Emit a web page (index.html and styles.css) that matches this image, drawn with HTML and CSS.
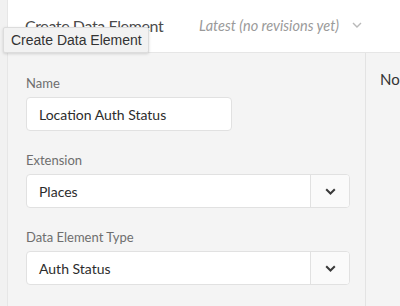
FILE: index.html
```html
<!DOCTYPE html>
<html lang="en">

<head>
  <meta charset="UTF-8">
  <meta name="viewport" content="width=device-width, initial-scale=1.0">
  <title>Create Data Element</title>
  <link rel="stylesheet" href="styles.css">
</head>

<body>
  <div class="app">
    <div class="rail"></div>

    <div class="main">
      <header class="header">
        <h1 class="header__title">Create Data Element</h1>
        <button class="header__revision" type="button">
          Latest (no revisions yet)
          <svg class="header__chevron" width="10" height="6" viewBox="0 0 10 6">
            <path d="M1 1l4 4 4-4" fill="none" stroke="currentColor" stroke-width="1.4" />
          </svg>
        </button>
      </header>

      <div class="content">
        <form class="form">
          <div class="field">
            <label class="field__label" for="name">Name</label>
            <input class="field__input" id="name" type="text" value="Location Auth Status">
          </div>

          <div class="field">
            <span class="field__label">Extension</span>
            <div class="picker">
              <span class="picker__value">Places</span>
              <span class="picker__button">
                <svg width="11" height="7" viewBox="0 0 11 7">
                  <path d="M1.2 1.2l4.3 4.3 4.3-4.3" fill="none" stroke="currentColor" stroke-width="2" />
                </svg>
              </span>
            </div>
          </div>

          <div class="field">
            <span class="field__label">Data Element Type</span>
            <div class="picker">
              <span class="picker__value">Auth Status</span>
              <span class="picker__button">
                <svg width="11" height="7" viewBox="0 0 11 7">
                  <path d="M1.2 1.2l4.3 4.3 4.3-4.3" fill="none" stroke="currentColor" stroke-width="2" />
                </svg>
              </span>
            </div>
          </div>
        </form>

        <aside class="aside">No</aside>
      </div>
    </div>
  </div>

  <div class="tooltip">Create Data Element</div>
</body>

</html>
```

FILE: styles.css
```css
*,
*:after,
*:before {
  margin: 0;
  padding: 0;
  box-sizing: border-box;
}

body {
  font-family: Lato, "Open Sans", sans-serif;
  background: #f4f4f4;
  color: #2c2c2c;
}

.app {
  display: flex;
  height: 306px;
  overflow: hidden;
}

.rail {
  width: 8px;
  flex: none;
  background: #f1f1f1;
  border-right: 1px solid #e6e6e6;
}

.main {
  flex: 1;
  display: flex;
  flex-direction: column;
}

.header {
  height: 53px;
  flex: none;
  display: flex;
  align-items: center;
  padding: 0 0 2px 17px;
  background: #fff;
  border-bottom: 1px solid #e6e6e6;
}

.header__title {
  width: 174px;
  flex: none;
  white-space: nowrap;
  font-size: 16px;
  letter-spacing: -0.4px;
  font-weight: 400;
  color: #4b4b4b;
}

.header__revision {
  display: flex;
  align-items: center;
  gap: 13px;
  border: 0;
  background: none;
  font-family: inherit;
  font-size: 14.5px;
  font-style: italic;
  color: #9a9a9a;
  white-space: nowrap;
}

.header__chevron {
  color: #b9b9b9;
}

.content {
  flex: 1;
  display: flex;
}

.form {
  width: 358px;
  flex: none;
  display: flex;
  flex-direction: column;
  gap: 20px;
  padding: 21px 0 0 18px;
  border-right: 1px solid #e3e3e3;
}

.field {
  display: flex;
  flex-direction: column;
  gap: 5px;
}

.field__label {
  font-size: 13px;
  line-height: 18px;
  color: #6e6e6e;
}

.field__input {
  width: 206px;
  height: 34px;
  padding: 0 12px;
  border: 1px solid #e1e1e1;
  border-radius: 4px;
  background: #fff;
  font-family: inherit;
  font-size: 14px;
  color: #2c2c2c;
}

.picker {
  width: 324px;
  height: 34px;
  display: flex;
  border: 1px solid #e1e1e1;
  border-radius: 4px;
  background: #fff;
  overflow: hidden;
}

.picker__value {
  flex: 1;
  display: flex;
  align-items: center;
  padding-left: 12px;
  font-size: 14px;
}

.picker__button {
  width: 39px;
  display: flex;
  align-items: center;
  justify-content: center;
  background: #fafafa;
  border-left: 1px solid #e1e1e1;
  color: #3a3a3a;
}

.aside {
  padding: 17px 0 0 14px;
  font-size: 15px;
  color: #333;
}

.tooltip {
  position: absolute;
  left: 3px;
  top: 27px;
  width: 146px;
  height: 26px;
  padding-left: 7px;
  display: flex;
  align-items: center;
  background: #f2f2f2;
  border: 1px solid #dcdcdc;
  border-radius: 2px;
  box-shadow: 0 1px 3px rgba(0, 0, 0, 0.15);
  font-family: "Liberation Sans", Arial, sans-serif;
  font-size: 14px;
  color: #333;
}
```
